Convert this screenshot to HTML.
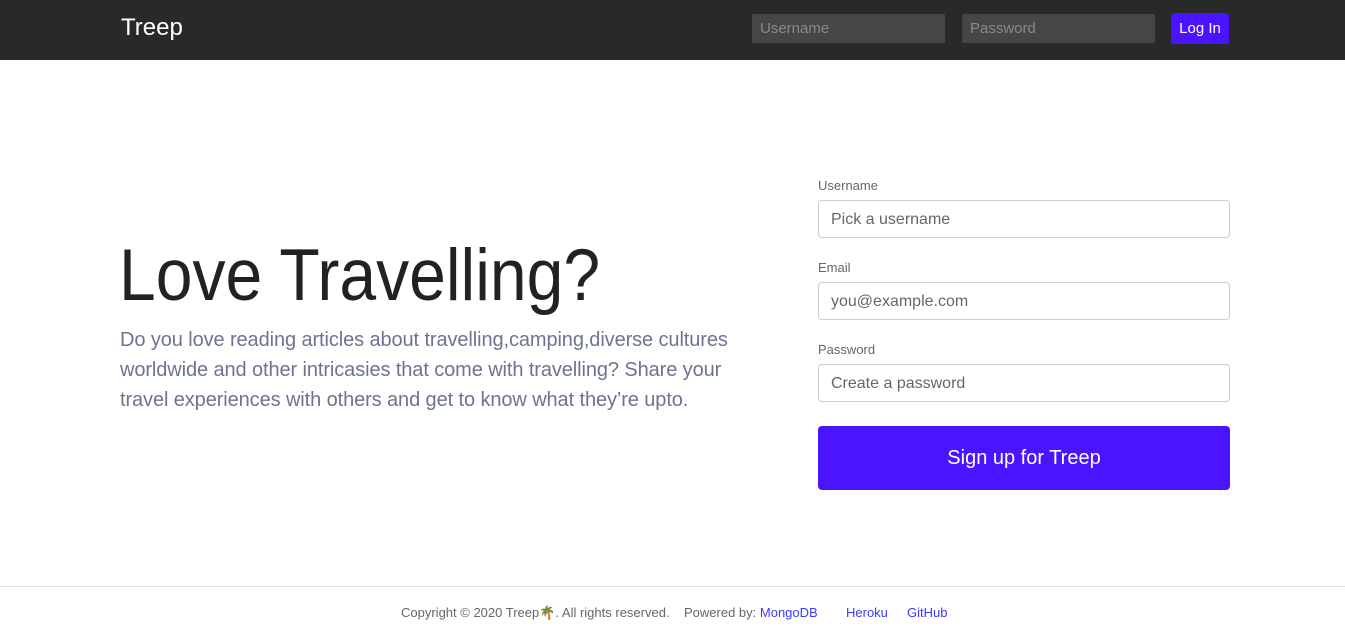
<!DOCTYPE html>
<html><head><style>
*{box-sizing:border-box;margin:0;padding:0}
body{width:1345px;height:627px;overflow:hidden;background:#fff;font-family:"Liberation Sans",sans-serif;position:relative}
.nav{position:absolute;left:0;top:0;width:1345px;height:60px;background:#292929}
.brand{position:absolute;left:121px;top:14px;color:#fff;font-size:24px}
.ni{position:absolute;top:14px;height:29px;background:#464646;border-radius:2px;color:#8a8a8a;font-size:15px;padding:6px 8px}
.login{position:absolute;left:1171px;top:13px;width:58px;height:31px;background:#4a14ff;border-radius:3px;color:#fff;font-size:15px;text-align:center;line-height:31px}
h1{position:absolute;left:119px;top:234px;font-size:73px;font-weight:normal;color:#222;transform:scaleX(0.905);transform-origin:left;white-space:nowrap}
.lead{position:absolute;left:120px;top:325px;width:640px;font-size:20px;line-height:30px;color:#6c7490;letter-spacing:-0.1px}
label{position:absolute;left:818px;font-size:13px;color:#666}
.in{position:absolute;left:818px;width:412px;height:38px;border:1px solid #ccc;border-radius:4px;font-size:16px;color:#666;padding:10px 12px}
.btn{position:absolute;left:818px;top:426px;width:412px;height:64px;background:#4a14ff;border-radius:4px;color:#fff;font-size:20px;text-align:center;line-height:64px}
.foot{position:absolute;left:0;top:586px;width:1345px;border-top:1px solid #ddd}
.ft{position:absolute;top:605px;font-size:13px;color:#666;white-space:pre}
.ft a{color:#3a3aff;text-decoration:none}
</style></head><body>
<div class="nav"><div class="brand">Treep</div>
<div class="ni" style="left:752px;width:193px">Username</div>
<div class="ni" style="left:962px;width:193px">Password</div>
<div class="login">Log In</div></div>
<h1>Love Travelling?</h1>
<div class="lead">Do you love reading articles about travelling,camping,diverse cultures worldwide and other intricasies that come with travelling? Share your travel experiences with others and get to know what they’re upto.</div>
<label style="top:178px">Username</label><div class="in" style="top:200px">Pick a username</div>
<label style="top:260px">Email</label><div class="in" style="top:282px">you@example.com</div>
<label style="top:342px">Password</label><div class="in" style="top:364px">Create a password</div>
<div class="btn">Sign up for Treep</div>
<div class="foot"></div>
<div class="ft" style="left:401px">Copyright © 2020 Treep🌴. All rights reserved.    Powered by: <a>MongoDB</a></div>
<div class="ft" style="left:846px"><a>Heroku</a></div>
<div class="ft" style="left:907px"><a>GitHub</a></div>
</body></html>
